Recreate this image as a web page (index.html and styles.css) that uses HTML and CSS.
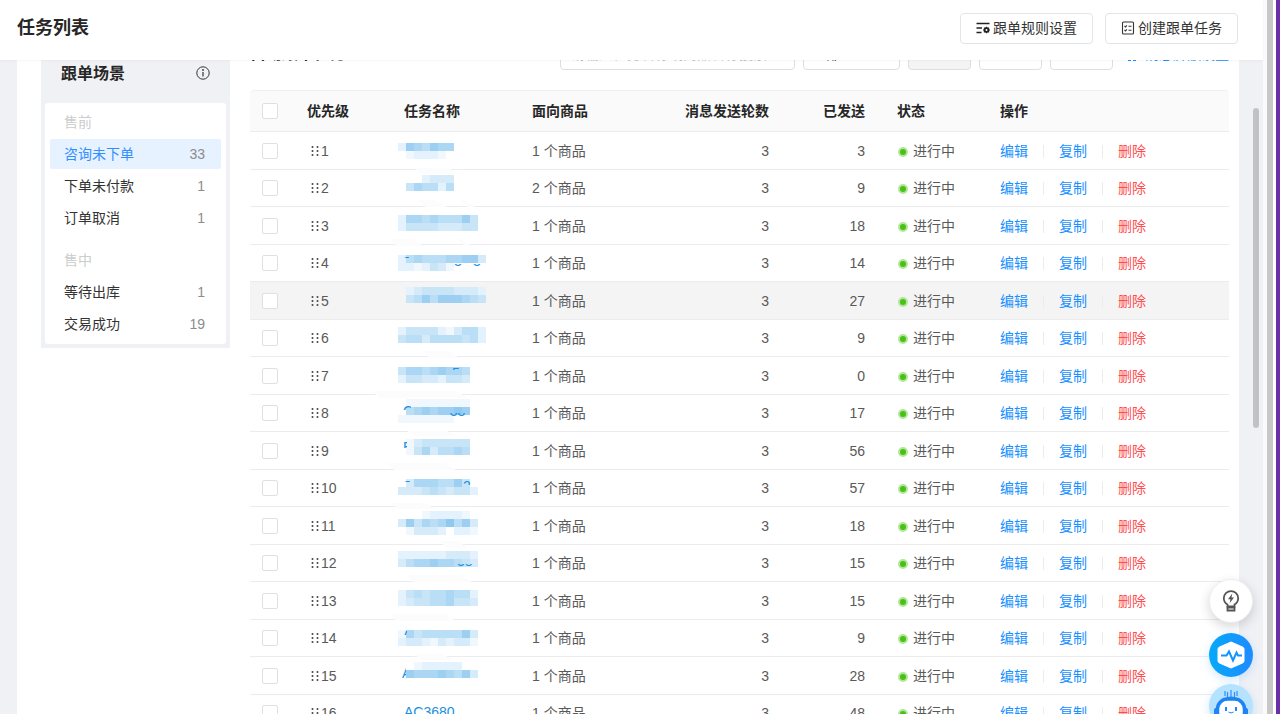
FILE: index.html
```html
<!DOCTYPE html>
<html lang="zh-CN">
<head>
<meta charset="utf-8">
<title>任务列表</title>
<link rel="stylesheet" href="styles.css">
</head>
<body>
<div class="app">
  <header class="topbar">
    <h1 class="topbar-title">任务列表</h1>
    <button class="btn" type="button">
      <svg class="btn-icon" viewBox="0 0 14 14"><path d="M0.500 2.500h13M0.500 7h5.500M0.500 11.500h5" fill="none" stroke="#222" stroke-width="1.300"/><path d="M10.500 5.500l1.100 1.100 1.500-.1.100 1.500.8 1-.8 1-.1 1.500-1.500-.1-1.100 1.100-1.100-1.100-1.500.1-.1-1.500-.8-1 .8-1 .1-1.500 1.500.1z" fill="#222"/><circle cx="10.500" cy="9" r="1" fill="#fff"/></svg>
      跟单规则设置
    </button>
    <button class="btn" type="button">
      <svg class="btn-icon" viewBox="0 0 14 14" fill="none" stroke="#333" stroke-width="1.100"><rect x="1.500" y="1" width="11" height="12" rx="1"/><path d="M3.500 5l1 1 1.300-1.700M3.500 9l1 1 1.300-1.700M7.500 5.300h3M7.500 9.300h3"/></svg>
      创建跟单任务
    </button>
  </header>
  <div class="viewport">
    <div class="panel">
      <aside class="scenes">
        <div class="scenes-head">
          <h2 class="scenes-title">跟单场景</h2>
          <svg class="info" viewBox="0 0 14 14"><circle cx="7" cy="7" r="6.200" fill="none" stroke="#333"/><path d="M7 6v4.500" stroke="#333" stroke-width="1.200"/><circle cx="7" cy="4" r="0.900" fill="#333"/></svg>
        </div>
        <nav class="scenes-list">
          <div class="scene-group">售前</div>
          <a class="scene scene-active" href="#"><span>咨询未下单</span><span class="count">33</span></a>
          <a class="scene" href="#"><span>下单未付款</span><span class="count">1</span></a>
          <a class="scene" href="#"><span>订单取消</span><span class="count">1</span></a>
          <div class="scene-group">售中</div>
          <a class="scene" href="#"><span>等待出库</span><span class="count">1</span></a>
          <a class="scene" href="#"><span>交易成功</span><span class="count">19</span></a>
        </nav>
      </aside>
      <main class="tasks">
        <div class="toolbar">
          <h2 class="toolbar-title">自动跟单任务</h2>
          <input class="field search" type="text" aria-label="搜索" placeholder="请输入任务名称或商品名称搜索">
          <select class="field status-select" aria-label="状态"><option>全部</option></select>
          <button class="field tool tool-off" type="button" aria-label="查询" disabled></button>
          <button class="field tool" type="button" aria-label="重置"></button>
          <button class="field tool" type="button" aria-label="批量"></button>
          <a class="toolbar-link" href="#"><svg class="link-icon" viewBox="0 0 10 16"><path d="M1 1h3v14H1zM6 1h3v14H6z" fill="#1890ff"/></svg>消息屏蔽设置</a>
        </div>
        <table class="table">
          <colgroup><col class="c-check"><col class="c-order"><col class="c-name"><col class="c-goods"><col class="c-rounds"><col class="c-sent"><col class="c-state"><col></colgroup>
          <thead>
            <tr>
              <th class="check"><input type="checkbox" aria-label="全选"></th>
              <th>优先级</th><th>任务名称</th><th>面向商品</th><th class="num">消息发送轮数</th><th class="num">已发送</th><th>状态</th><th>操作</th>
            </tr>
          </thead>
          <tbody id="rows"></tbody>
        </table>
      </main>
    </div>
    <div class="scrollbar"></div>
  </div>
</div>
<div class="edge"></div>
<div class="floats">
  <button class="float float-tip" type="button" aria-label="建议">
    <svg viewBox="0 0 24 24" width="24" height="24" fill="none" stroke="#555" stroke-width="1.800"><path d="M8.500 17.500v-2C6.200 14.200 4.800 12 4.800 9.300a7.200 7.200 0 0 1 14.400 0c0 2.700-1.400 4.900-3.700 6.200v2z"/><path d="M8.500 18.500h7v3h-7z"/><path d="M13.300 4.500L9 10.200h2.500l-.9 4 4.400-5.800h-2.500z" fill="#555" stroke="none"/></svg>
  </button>
  <button class="float float-pulse" type="button" aria-label="诊断">
    <svg viewBox="0 0 44 44" width="44" height="44"><path d="M22 9l11.500 5q1.500.7 1.500 2v12q0 1.300-1.500 2L22 35l-11.500-5Q9 29.300 9 28V16q0-1.300 1.500-2z" fill="#fff" stroke="#fff" stroke-linejoin="round"/><path d="M12 22.500h5.500l2.500-4 4 9 3.500-8 1.500 3h4" fill="none" stroke="#1493ff" stroke-width="2"/></svg>
  </button>
  <button class="float float-bot" type="button" aria-label="客服">
    <svg viewBox="0 0 44 44" width="44" height="44"><path d="M22 6v8M18.500 8v6M25.500 8v6M16 7v5M28 7v5" stroke="#2f8dff" stroke-width="1.200"/><path d="M15 14.500q7-4 14 0z" fill="#2f8dff"/><rect x="8.500" y="15" width="27" height="24" rx="10" fill="#fff" stroke="#1d84f5" stroke-width="3.500"/><rect x="5" y="24" width="4" height="8" rx="2" fill="#1d84f5"/><rect x="35" y="24" width="4" height="8" rx="2" fill="#1d84f5"/><rect x="16" y="23" width="2" height="4" fill="#1d84f5"/><rect x="26" y="23" width="2" height="4" fill="#1d84f5"/><path d="M19.500 28q2.500 2 5 0" fill="none" stroke="#1d84f5"/></svg>
  </button>
</div>
<script src="rows.js"></script>
</body>
</html>
```

FILE: styles.css
```css
* { box-sizing: border-box; }
body {
  margin: 0;
  height: 100vh;
  display: flex;
  overflow: hidden;
  background: #fff;
  color: #262626;
  font: 14px/22px "Liberation Sans", "Noto Sans CJK SC", sans-serif;
}
a { text-decoration: none; color: #1890ff; }
button, input, select { font: inherit; }
h1, h2 { margin: 0; }

.app { flex: 1; min-width: 0; display: flex; flex-direction: column; }
.topbar {
  position: relative;
  z-index: 1;
  height: 60px;
  flex: none;
  display: flex;
  align-items: center;
  gap: 12px;
  padding: 0 25px 4px 17px;
  background: #fff;
  box-shadow: 0 1px 2px rgba(0, 0, 0, 0.04);
}
.topbar-title { flex: 1; font-size: 18px; line-height: 26px; }
.btn {
  height: 31px;
  display: flex;
  align-items: center;
  gap: 3px;
  padding: 0 15px;
  border: 1px solid #e3e4e6;
  border-radius: 4px;
  background: #fff;
  color: #333;
}
.btn-icon { width: 14px; height: 14px; }

.viewport {
  flex: 1;
  min-height: 0;
  display: flex;
  overflow: hidden;
  padding-left: 17px;
  background: #f0f1f5;
}
.panel {
  flex: 1;
  min-width: 0;
  display: flex;
  align-items: flex-start;
  gap: 20px;
  padding: 0 10px 0 24px;
  background: #fff;
}
.scrollbar {
  width: 6px;
  height: 320px;
  margin: 48px 4px 0 14px;
  border-radius: 3px;
  background: #c1c2c5;
}
.edge {
  width: 17px;
  border-left: 4px solid #fafafa;
  border-right: 4px solid #6b2fa8;
  background: linear-gradient(to right, #c8c8c8 6px, #fff 6px);
}

.scenes { width: 189px; flex: none; padding: 0 4px 4px; background: #f0f1f5; }
.scenes-head {
  height: 43px;
  display: flex;
  justify-content: space-between;
  padding: 2px 16px 0;
}
.scenes-title { font-size: 16px; line-height: 24px; }
.info { width: 14px; height: 14px; margin-top: 4px; }
.scenes-list { padding: 4px 5px 5px; border-radius: 3px; background: #fff; }
.scene, .scene-group {
  height: 30px;
  display: flex;
  align-items: center;
  justify-content: space-between;
  padding: 0 16px 0 14px;
}
.scene { margin-top: 2px; border-radius: 2px; color: #333; }
.scene-group { color: #ccc; }
.scene + .scene-group { margin-top: 12px; }
.scene-active { background: #e6f2ff; color: #338fff; }
.count { color: #8c8c8c; }

.tasks { flex: 1; min-width: 0; }
.toolbar {
  display: flex;
  align-items: center;
  gap: 8px;
  height: 32px;
  margin: -22px 0 20px;
}
.toolbar-title { flex: 1; font-size: 16px; line-height: 24px; }
.field { height: 32px; border: 1px solid #dddfe2; border-radius: 4px; background: #fff; }
.search { width: 235px; padding: 0 10px; }
.search::placeholder { color: #bfbfbf; }
.status-select { width: 97px; padding: 0 8px; appearance: none; color: #333; }
.tool { width: 63px; }
.tool-off { background: #f4f4f5; }
.toolbar-link { display: flex; align-items: center; gap: 8px; margin-left: 6px; }
.link-icon { width: 10px; height: 16px; }

.table { width: 100%; table-layout: fixed; border-collapse: separate; border-spacing: 0; }
.c-check { width: 41px; }
.c-order { width: 97px; }
.c-name { width: 128px; }
.c-goods { width: 137px; }
.c-rounds { width: 132px; }
.c-sent { width: 96px; }
.c-state { width: 103px; }
th, td { padding: 0 16px; text-align: left; white-space: nowrap; border-bottom: 1px solid #ececee; }
th { height: 42px; background: #fafafa; border-top: 1px solid #f0f0f0; }
th:first-child { border-top-left-radius: 4px; }
th:last-child { border-top-right-radius: 4px; }
td { height: 38px; color: #595959; }
tr:nth-child(even) td { height: 37px; }
.row-hover td { background: #f4f4f4; }
.num { text-align: right; }
th.check, td.check { padding: 0 12px; }
.check input {
  display: block;
  appearance: none;
  width: 16px;
  height: 16px;
  margin: 0;
  border: 1px solid #dfe0e3;
  border-radius: 2px;
  background: #fff;
}
td.order { padding-left: 20px; }
.grip { width: 8px; height: 10px; margin-right: 2px; }
td.name { padding: 0 0 0 8px; vertical-align: top; }
.name-link { display: block; padding-left: 8px; line-height: 34px; color: #1a90e0; }
.mosaic { display: block; width: 96px; height: 32px; overflow: visible; }
.mosaic text { fill: #1a90e0; }
.dot {
  display: inline-block;
  width: 10px;
  height: 10px;
  margin: 0 5px 0 1px;
  border: 2px solid #b2e69b;
  border-radius: 50%;
  background: #48c114;
  vertical-align: -1px;
}
.actions { display: flex; align-items: center; }
.actions a + a { margin-left: 15px; padding-left: 16px; background: linear-gradient(#ececee, #ececee) 0 5px / 1px 13px no-repeat; }
.actions .danger { color: #ff4d4f; }

.floats { position: fixed; right: 27px; top: 579px; z-index: 2; display: flex; flex-direction: column; align-items: center; gap: 7px; }
.float {
  width: 44px;
  height: 44px;
  display: flex;
  align-items: center;
  justify-content: center;
  padding: 0;
  border: 0;
  border-radius: 50%;
}
.float-tip { margin-bottom: 3px; border: 1px solid #eee; background: #fff; box-shadow: 0 4px 12px rgba(0, 0, 0, 0.16); }
.float-pulse { background: linear-gradient(to right, #06a9fb, #1f8bff); box-shadow: 0 3px 10px rgba(24, 144, 255, 0.2); }
.float-bot { background: #b5e2ff; box-shadow: 0 3px 10px rgba(24, 144, 255, 0.2); }
```

FILE: rows.js
```js
// Mask shades from lightest to darkest; index 0 leaves the cell empty.
const SHADES = ["", "#f1f8fd", "#e3f2fc", "#d6ebfa", "#c8e5f8", "#badef6", "#abd6f4", "#9dcff2", "#8fc9f0"];

// y: top of the mask inside the row; cells: one string of shades per 8px line;
// bits: [text, x, baseline, clipX, clipY, clipW, clipH]; smear: [x1, x2, y, h]
const TASKS = [
  { goods: 1, sent: 3, y: 12, cells: ["2765766", "0122210"], smear: [[18, 64, 37, 6]] },
  { goods: 2, sent: 9, y: 6, cells: ["0002333", "0465525"], smear: [[22, 51, 31, 7], [64, 79, 31, 7]] },
  { goods: 1, sent: 18, y: 9, cells: ["2665655574", "2444433344"], smear: [[-7, 28, 33, 7], [61, 77, 33, 7]] },
  { goods: 1, sent: 14, y: 11, cells: ["25655566773", "22124310000"], bits: [["3", 58, 22, 58, 20, 8, 3], ["3", 77, 22, 77, 20, 8, 3], ["C", 6, 23, 6, 12, 7, 2]], smear: [] },
  { goods: 1, sent: 27, hover: true, y: 6, cells: ["02344443332", "04575777654"], smear: [] },
  { goods: 1, sent: 9, y: 8, cells: ["24444213552", "45535555452"], smear: [[26, 64, 32, 7]] },
  { goods: 1, sent: 0, y: 11, cells: ["466567665", "244332443"], bits: [["5", 56, 22, 57, 12, 6, 2]], smear: [[-24, 72, 35, 7]] },
  { goods: 1, sent: 17, y: 5, cells: ["011111111", "056767787", "111111100"], bits: [["C", 7, 22, 6, 10, 9, 6], ["738", 46, 22, 51, 19, 26, 4]], smear: [[11, 63, 37, 5]] },
  { goods: 1, sent: 56, y: 8, cells: ["013444444", "014635565"], bits: [["E", 7, 21, 6, 8, 5, 9]], smear: [[-9, 60, 32, 7]] },
  { goods: 1, sent: 57, y: 10, cells: ["036665574", "3334543442"], bits: [["2", 67, 22, 67, 11, 8, 5], ["S", 7, 22, 7, 11, 7, 2]], smear: [[-6, 40, 34, 6]] },
  { goods: 1, sent: 18, y: 5, cells: ["0001222210", "3746568573", "0133320221"], smear: [[43, 73, 35, 7]] },
  { goods: 1, sent: 15, y: 7, cells: ["2222223332", "3566766543"], bits: [["38", 61, 22, 61, 20, 17, 3]], smear: [[10, 76, 31, 7]] },
  { goods: 1, sent: 15, y: 9, cells: ["2454556552", "2344556443"], smear: [[-7, 61, 33, 7]] },
  { goods: 1, sent: 9, y: 11, cells: ["1645555573", "2332132331"], bits: [["A", 6, 22, 6, 11, 5, 5]], smear: [[18, 58, 35, 6]] },
  { goods: 1, sent: 28, y: 6, cells: ["0012222200", "0766676573"], bits: [["A", 6, 22, 6, 12, 4, 11]], smear: [] },
  { goods: 1, sent: 48, name: "AC3680" }
];

function mosaic(task) {
  let out = "";
  for (const [x1, x2, y, h] of task.smear) {
    out += `<path d="M${x1} ${y}H${x2 - 12}L${x2} ${y + h}H${x1 + 8}z" fill="#fcfcfc"/>`;
  }
  task.cells.forEach((line, j) => {
    [...line].forEach((level, i) => {
      if (level !== "0") {
        out += `<rect x="${i * 8 + 2}" y="${task.y + j * 8}" width="8" height="8" fill="${SHADES[level]}"/>`;
      }
    });
  });
  for (const [text, x, base, cx, cy, cw, ch] of task.bits || []) {
    out += `<svg x="${cx}" y="${cy}" width="${cw}" height="${ch}"><text x="${x - cx}" y="${base - cy}">${text}</text></svg>`;
  }
  return `<svg class="mosaic" viewBox="0 1 96 32" shape-rendering="crispEdges">${out}</svg>`;
}

const dots = [1, 5, 9].map(y => `<circle cx="1.500" cy="${y}" r="1"/><circle cx="6.500" cy="${y}" r="1"/>`).join("");
const grip = `<svg class="grip" viewBox="0 0 8 10" fill="#444">${dots}</svg>`;

document.getElementById("rows").innerHTML = TASKS.map((task, i) => `
  <tr${task.hover ? ' class="row-hover"' : ""}>
    <td class="check"><input type="checkbox" aria-label="选择任务 ${i + 1}"></td>
    <td class="order">${grip}${i + 1}</td>
    <td class="name">${task.name ? `<a class="name-link" href="#">${task.name}</a>` : mosaic(task)}</td>
    <td>${task.goods} 个商品</td>
    <td class="num">3</td>
    <td class="num">${task.sent}</td>
    <td><span class="dot"></span>进行中</td>
    <td><div class="actions"><a href="#">编辑</a><a href="#">复制</a><a class="danger" href="#">删除</a></div></td>
  </tr>`).join("");
```
